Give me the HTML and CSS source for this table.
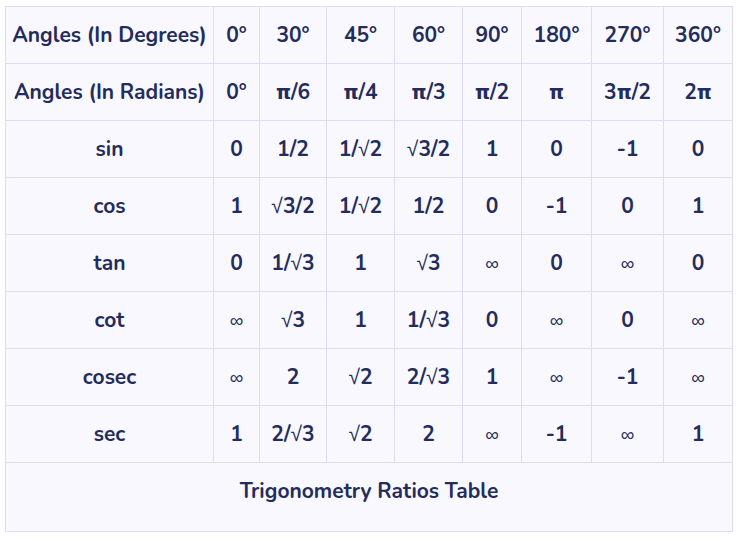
FILE: index.html
```html
<!DOCTYPE html>
<html lang="en">
<head>
<meta charset="utf-8">
<title>Trigonometry Ratios Table</title>
<link rel="stylesheet" href="styles.css">
</head>
<body>
<div class="wrap">
<table class="trig">
  <colgroup>
    <col class="c-label"><col class="c1"><col class="c2"><col class="c3"><col class="c3"><col class="c5"><col class="c6"><col class="c7"><col class="c8">
  </colgroup>
  <tbody>
    <tr><td>Angles (In Degrees)</td><td>0°</td><td>30°</td><td>45°</td><td>60°</td><td>90°</td><td>180°</td><td>270°</td><td>360°</td></tr>
    <tr><td>Angles (In Radians)</td><td>0°</td><td><span class="pi">π</span>/6</td><td><span class="pi">π</span>/4</td><td><span class="pi">π</span>/3</td><td><span class="pi">π</span>/2</td><td><span class="pi">π</span></td><td>3<span class="pi">π</span>/2</td><td>2<span class="pi">π</span></td></tr>
    <tr><td>sin</td><td>0</td><td>1/2</td><td>1/<span class="sq">√</span>2</td><td><span class="sq">√</span>3/2</td><td>1</td><td>0</td><td>-1</td><td>0</td></tr>
    <tr><td>cos</td><td>1</td><td><span class="sq">√</span>3/2</td><td>1/<span class="sq">√</span>2</td><td>1/2</td><td>0</td><td>-1</td><td>0</td><td>1</td></tr>
    <tr><td>tan</td><td>0</td><td>1/<span class="sq">√</span>3</td><td>1</td><td><span class="sq">√</span>3</td><td><span class="inf">∞</span></td><td>0</td><td><span class="inf">∞</span></td><td>0</td></tr>
    <tr><td>cot</td><td><span class="inf">∞</span></td><td><span class="sq">√</span>3</td><td>1</td><td>1/<span class="sq">√</span>3</td><td>0</td><td><span class="inf">∞</span></td><td>0</td><td><span class="inf">∞</span></td></tr>
    <tr><td>cosec</td><td><span class="inf">∞</span></td><td>2</td><td><span class="sq">√</span>2</td><td>2/<span class="sq">√</span>3</td><td>1</td><td><span class="inf">∞</span></td><td>-1</td><td><span class="inf">∞</span></td></tr>
    <tr><td>sec</td><td>1</td><td>2/<span class="sq">√</span>3</td><td><span class="sq">√</span>2</td><td>2</td><td><span class="inf">∞</span></td><td>-1</td><td><span class="inf">∞</span></td><td>1</td></tr>
  </tbody>
  <tfoot>
    <tr><td class="caption" colspan="9">Trigonometry Ratios Table</td></tr>
  </tfoot>
</table>
</div>
</body>
</html>
```

FILE: styles.css
```css
html, body {
  margin: 0;
  padding: 0;
  background: #ffffff;
}
.wrap {
  padding: 6px 7px 10px 5px;
}
.trig {
  width: 727px;
  table-layout: fixed;
  border-collapse: collapse;
  background: #f8f8fe;
  color: #232c5c;
  font-family: "Nunito", "Open Sans", sans-serif;
  font-weight: 700;
  font-size: 21px;
}
.c-label { width: 208px; }
.c1 { width: 46px; }
.c2 { width: 67px; }
.c3 { width: 68px; }
.c5 { width: 59px; }
.c6 { width: 70px; }
.c7 { width: 72px; }
.c8 { width: 69px; }
.trig td {
  border: 1px solid #dedcf3;
  height: 56px;
  padding: 0;
  text-align: center;
  vertical-align: middle;
  white-space: nowrap;
  line-height: 26px;
}
.pi {
  font-family: "DejaVu Sans", sans-serif;
  font-weight: 700;
  font-size: 19px;
}
.sq {
  font-family: "Liberation Sans", sans-serif;
  font-weight: 400;
}
.inf {
  font-family: "Liberation Sans", sans-serif;
  font-weight: 400;
  font-size: 19px;
}
.trig td.caption {
  height: 69px;
  vertical-align: top;
  padding-top: 15px;
  box-sizing: border-box;
}
```
